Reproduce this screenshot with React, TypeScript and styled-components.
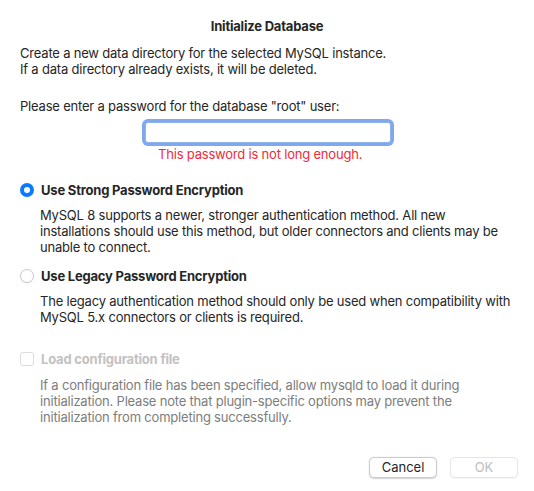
import React from "react";
import styled, { createGlobalStyle } from "styled-components";

const Global = createGlobalStyle`
  html, body { margin: 0; padding: 0; background: #ffffff; }
  body { font-family: Inter, "Liberation Sans", sans-serif; font-size: 13px; letter-spacing: -0.2px; color: #262626; -webkit-font-smoothing: antialiased; }
`;

const Dialog = styled.div`
  width: 534px;
  height: 491px;
  box-sizing: border-box;
  padding: 17px 16px 0 20px;
  display: flex;
  flex-direction: column;
`;

const Title = styled.div`
  font-weight: 700;
  text-align: center;
  line-height: 18px;
  margin-bottom: 10px;
  padding-right: 4px;
`;

const Text = styled.div<{ $muted?: boolean }>`
  line-height: 16px;
  white-space: nowrap;
  color: ${(p) => (p.$muted ? "#7d7d7d" : "#262626")};
`;

const Spacer = styled.div<{ $h: number }>`
  height: ${(p) => p.$h}px;
  flex: none;
`;

const FieldRow = styled.div`
  display: flex;
  flex-direction: column;
  align-items: flex-start;
  padding-left: 122px;
  margin-top: 5px;
`;

const Input = styled.input`
  width: 246px;
  height: 21px;
  box-sizing: border-box;
  border: 1px solid #8fb2ec;
  border-radius: 3px;
  outline: none;
  box-shadow: 0 0 0 3px #7fa8ee;
  margin: 3px 0 0 3px;
  background: #fff;
  font: inherit;
`;

const ErrorText = styled.div`
  color: #ef2b38;
  line-height: 16px;
  margin-top: 3px;
  padding-left: 16px;
`;

const OptionRow = styled.div<{ $dim?: boolean }>`
  display: flex;
  align-items: center;
  gap: 7px;
  height: 18px;
  font-weight: 700;
  color: ${(p) => (p.$dim ? "#c2c2c2" : "#262626")};
`;

const Radio = styled.span<{ $on?: boolean }>`
  width: 14px;
  height: 14px;
  box-sizing: border-box;
  border-radius: 50%;
  flex: none;
  display: flex;
  align-items: center;
  justify-content: center;
  background: ${(p) => (p.$on ? "#0a7aff" : "#ffffff")};
  border: ${(p) => (p.$on ? "none" : "1px solid #c9c9c9")};
  box-shadow: ${(p) => (p.$on ? "none" : "0 0.5px 1px rgba(0,0,0,0.08)")};
  &::after {
    content: "";
    display: ${(p) => (p.$on ? "block" : "none")};
    width: 6px;
    height: 6px;
    border-radius: 50%;
    background: #fff;
  }
`;

const Check = styled.span`
  width: 14px;
  height: 14px;
  box-sizing: border-box;
  border: 1px solid #dcdcdc;
  border-radius: 3px;
  flex: none;
  background: #fff;
`;

const Desc = styled.div<{ $gap?: number }>`
  padding-left: 20px;
  margin-top: ${(p) => p.$gap ?? 8}px;
`;

const Footer = styled.div`
  display: flex;
  justify-content: flex-end;
  gap: 13px;
  margin-top: auto;
  margin-bottom: 13px;
`;

const Button = styled.button<{ $disabled?: boolean }>`
  width: 68px;
  height: 21px;
  box-sizing: border-box;
  border: 0.5px solid ${(p) => (p.$disabled ? "#e6e6e6" : "#cdcdcd")};
  border-radius: 5px;
  background: #ffffff;
  box-shadow: ${(p) => (p.$disabled ? "0 0.5px 1px rgba(0,0,0,0.05)" : "0 0.5px 1.5px rgba(0,0,0,0.18)")};
  color: ${(p) => (p.$disabled ? "#c0c0c0" : "#262626")};
  font: inherit;
  font-size: 13px;
  padding: 0;
  line-height: 19px;
`;

export default function App() {
  return (
    <>
      <Global />
      <Dialog>
        <Title>Initialize Database</Title>
        <Text>Create a new data directory for the selected MySQL instance.</Text>
        <Text>If a data directory already exists, it will be deleted.</Text>
        <Spacer $h={21} />
        <Text>Please enter a password for the database "root" user:</Text>
        <FieldRow>
          <Input type="password" />
          <ErrorText>This password is not long enough.</ErrorText>
        </FieldRow>
        <Spacer $h={19} />
        <OptionRow>
          <Radio $on />
          Use Strong Password Encryption
        </OptionRow>
        <Desc>
          <Text>MySQL 8 supports a newer, stronger authentication method. All new</Text>
          <Text>installations should use this method, but older connectors and clients may be</Text>
          <Text>unable to connect.</Text>
        </Desc>
        <Spacer $h={12} />
        <OptionRow>
          <Radio />
          Use Legacy Password Encryption
        </OptionRow>
        <Desc>
          <Text>The legacy authentication method should only be used when compatibility with</Text>
          <Text>MySQL 5.x connectors or clients is required.</Text>
        </Desc>
        <Spacer $h={25} />
        <OptionRow $dim>
          <Check />
          Load configuration file
        </OptionRow>
        <Desc $gap={9}>
          <Text $muted>If a configuration file has been specified, allow mysqld to load it during</Text>
          <Text $muted>initialization. Please note that plugin-specific options may prevent the</Text>
          <Text $muted>initialization from completing successfully.</Text>
        </Desc>
        <Footer>
          <Button>Cancel</Button>
          <Button $disabled>OK</Button>
        </Footer>
      </Dialog>
    </>
  );
}
